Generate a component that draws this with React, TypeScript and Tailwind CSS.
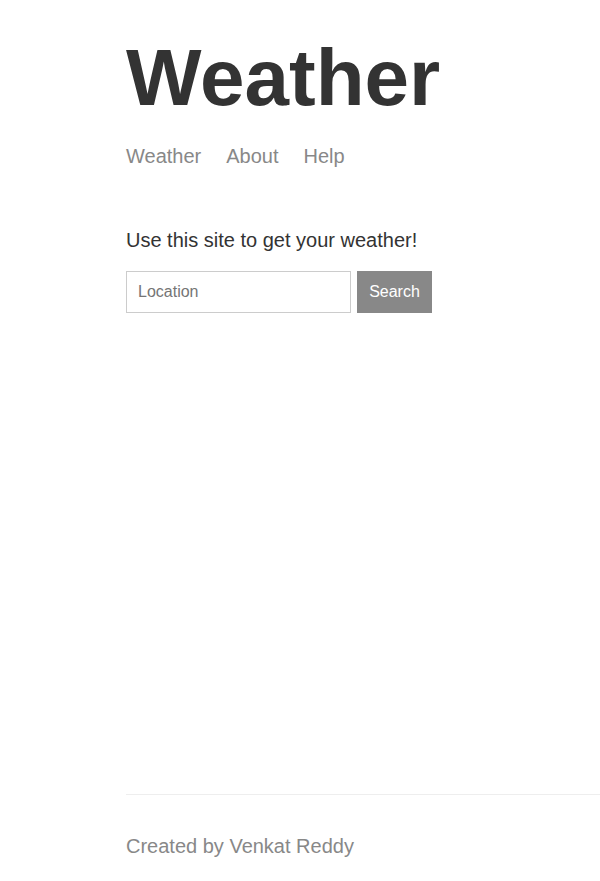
export default function App() {
  return (
    <div className="min-h-screen flex flex-col bg-white pl-[126px] font-['Liberation_Sans',Arial,sans-serif]">
      <div className="flex-1">
        <h1 className="mt-[32px] text-[80px] leading-[92px] font-bold text-[#333333]">Weather</h1>

        {/* Nav */}
        <nav className="mt-[20px] flex gap-[25px] text-[20px] leading-[24px] text-[#888888]">
          <a href="#">Weather</a>
          <a href="#">About</a>
          <a href="#">Help</a>
        </nav>

        <p className="mt-[60px] text-[20px] leading-[24px] text-[#333333]">Use this site to get your weather!</p>

        <form className="mt-[19px] flex gap-[6px]" onSubmit={(e) => e.preventDefault()}>
          <input
            placeholder="Location"
            className="w-[225px] h-[42px] border border-[#cccccc] px-[11px] text-[16px] text-[#333333] placeholder:text-[#757575] outline-none"
          />
          <button className="w-[75px] h-[42px] bg-[#888888] text-white text-[16px]">Search</button>
        </form>
      </div>

      <footer className="border-t border-[#eeeeee] pt-[39px] pb-[23px] text-[20px] leading-[24px] text-[#888888]">
        Created by Venkat Reddy
      </footer>
    </div>
  );
}
